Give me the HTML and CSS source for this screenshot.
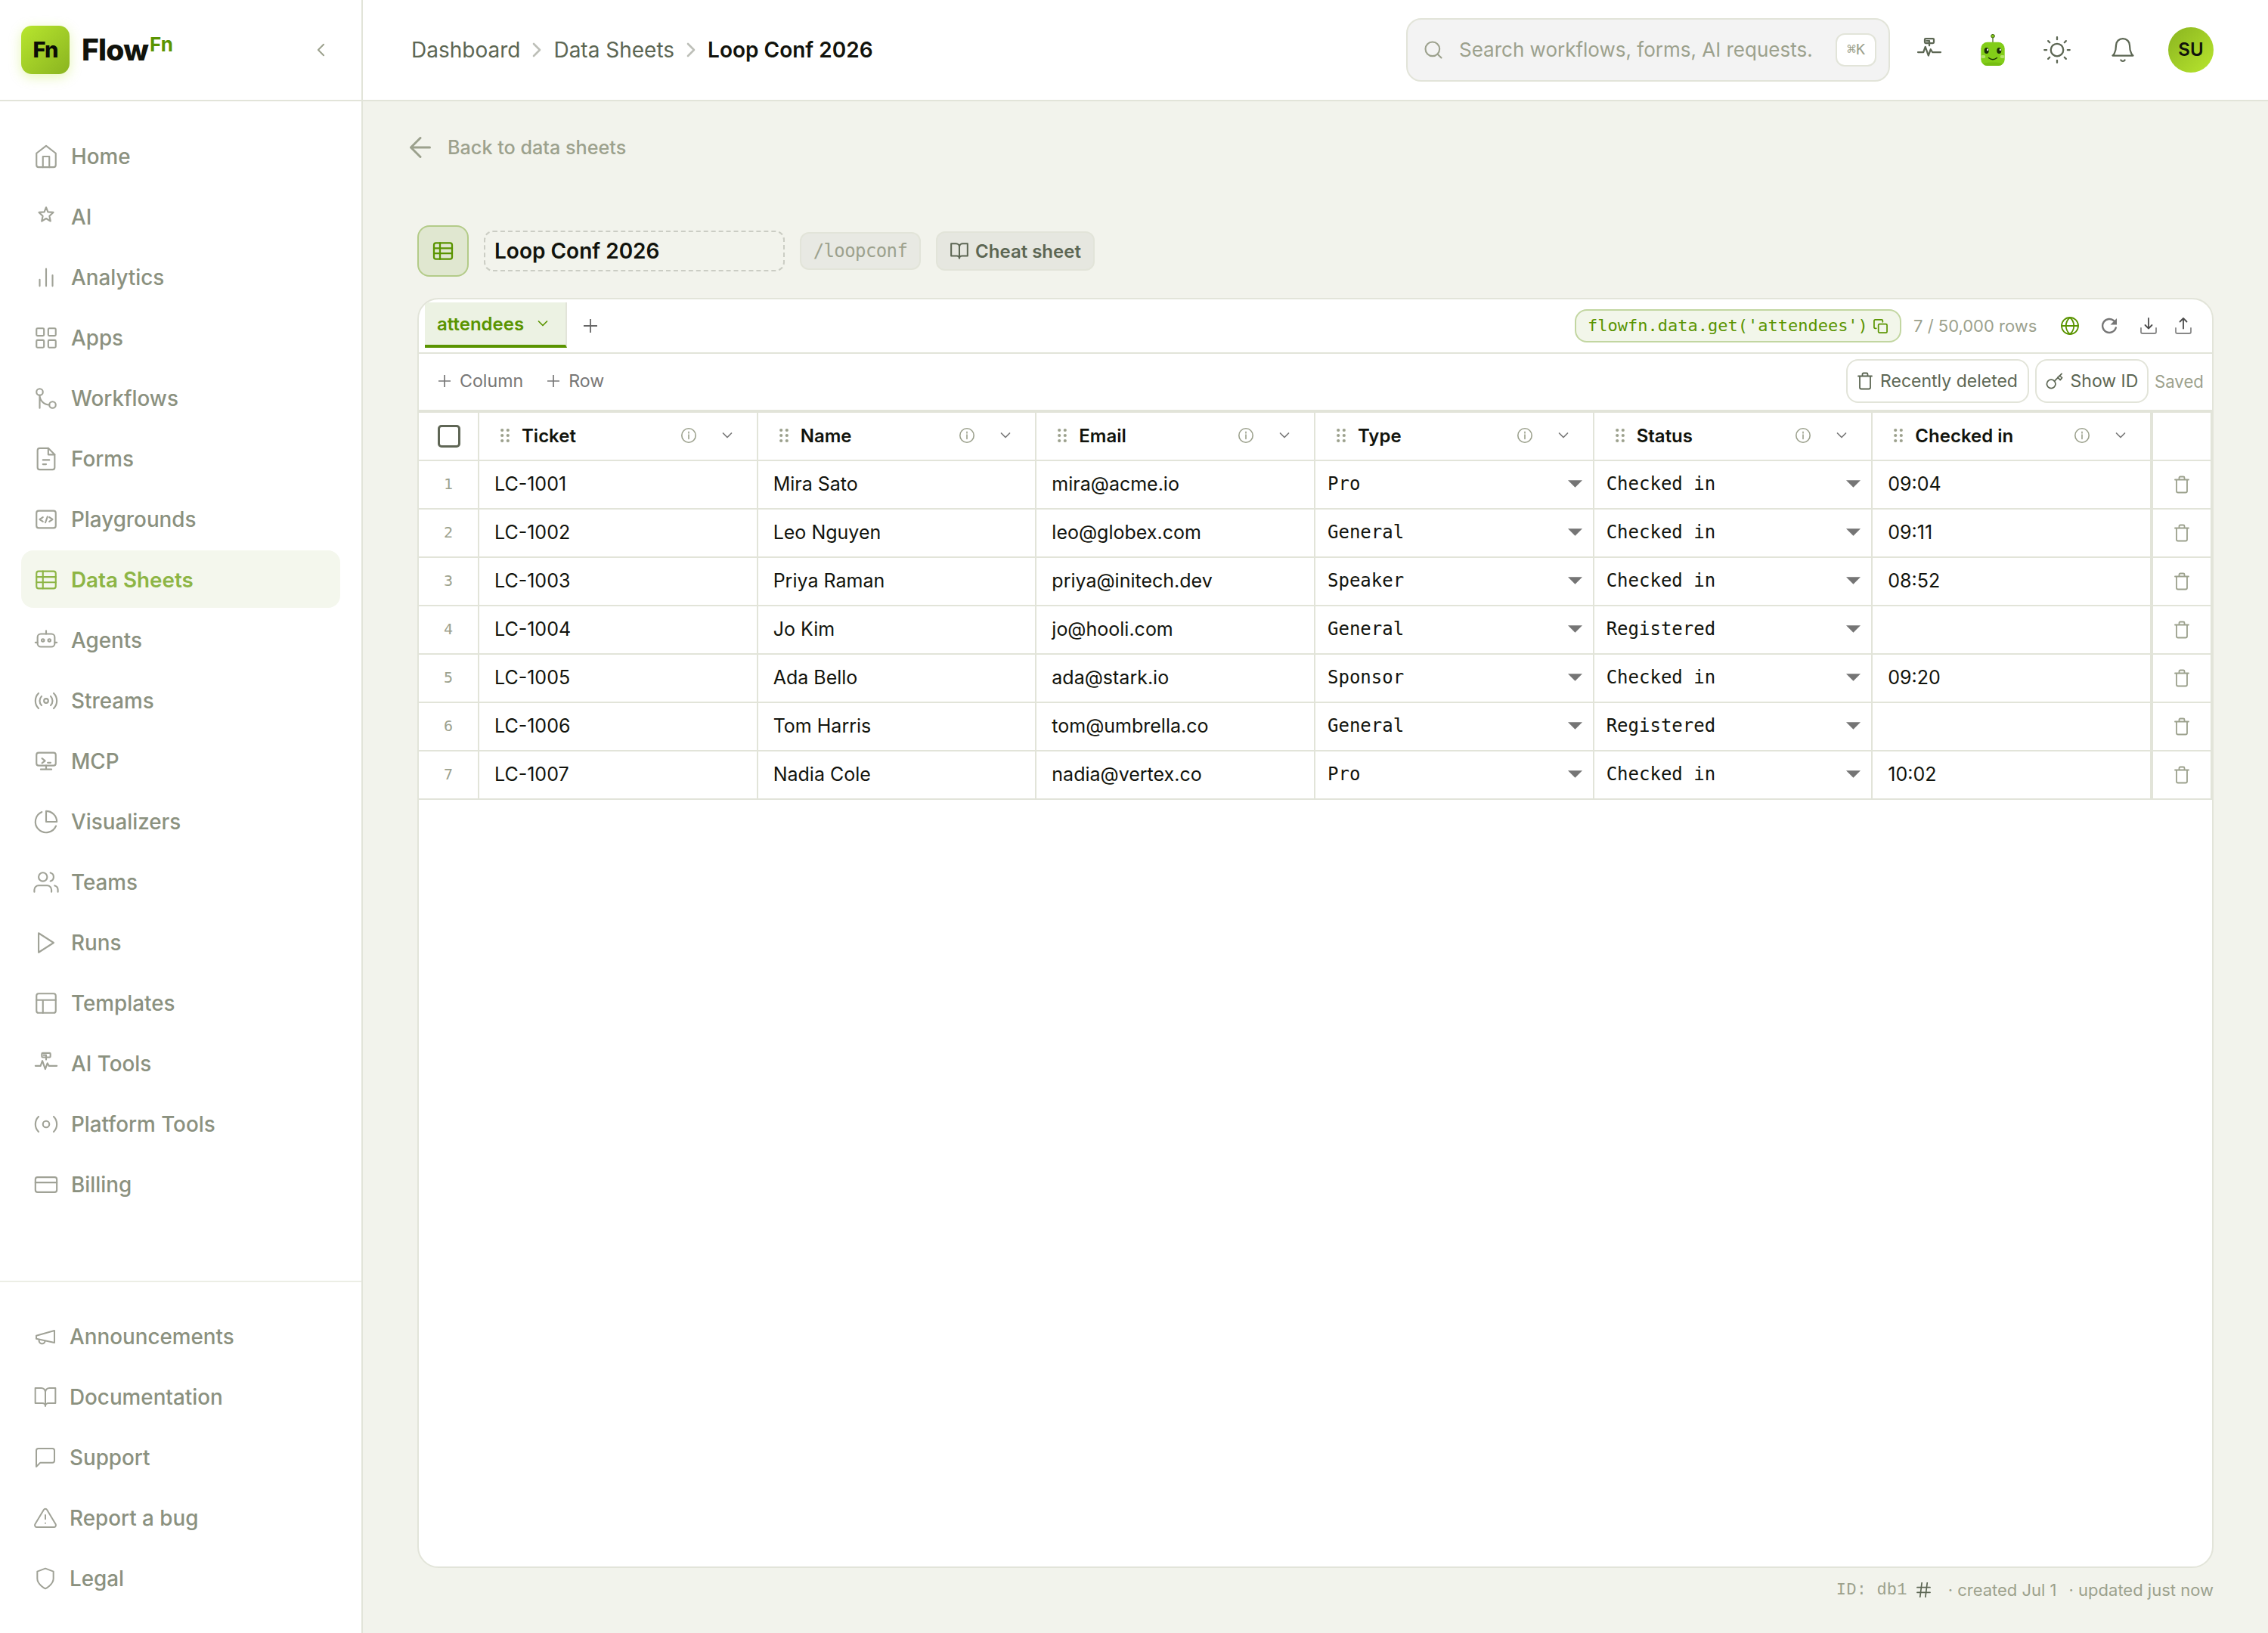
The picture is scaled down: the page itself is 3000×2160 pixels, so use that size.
FILE: index.html
```html
<!DOCTYPE html>
<html lang="en">
<head>
<meta charset="utf-8">
<title>Loop Conf 2026 – FlowFn</title>
<link rel="stylesheet" href="styles.css">
</head>
<body>
<svg class="sprite" width="0" height="0">
  <symbol id="i-home" viewBox="0 0 24 24"><path d="M3 9l9-7 9 7v11a2 2 0 0 1-2 2H5a2 2 0 0 1-2-2z"/><path d="M9 22V12h6v10"/></symbol>
  <symbol id="i-star" viewBox="0 0 24 24"><path d="M12 3l1.7 4.3 5 .4-3.6 3.4 1 4.8L12 13.400l-4.100 2.500 1-4.800-3.600-3.400 5-.4z"/></symbol>
  <symbol id="i-bars" viewBox="0 0 24 24"><path d="M6 20v-6M12 20V4M18 20V10"/></symbol>
  <symbol id="i-grid" viewBox="0 0 24 24"><rect x="3" y="3" width="7" height="7" rx="1"/><rect x="14" y="3" width="7" height="7" rx="1"/><rect x="3" y="14" width="7" height="7" rx="1"/><rect x="14" y="14" width="7" height="7" rx="1"/></symbol>
  <symbol id="i-flow" viewBox="0 0 24 24"><circle cx="6" cy="6" r="3"/><circle cx="18" cy="18" r="3"/><path d="M6 21V9a9 9 0 0 0 9 9"/></symbol>
  <symbol id="i-file" viewBox="0 0 24 24"><path d="M14 2H6a2 2 0 0 0-2 2v16a2 2 0 0 0 2 2h12a2 2 0 0 0 2-2V8z"/><path d="M14 2v6h6M9 13h6M9 17h3"/></symbol>
  <symbol id="i-code" viewBox="0 0 24 24"><rect x="3" y="4" width="18" height="16" rx="2"/><path d="M9 10l-3 2 3 2M15 10l3 2-3 2M13.300 9.500l-2 5.500"/></symbol>
  <symbol id="i-table" viewBox="0 0 24 24"><rect x="3" y="4" width="18" height="16" rx="2"/><path d="M3 9.300h18M3 14.300h18M9 4v16"/></symbol>
  <symbol id="i-bot" viewBox="0 0 24 24"><rect x="4" y="6" width="16" height="12" rx="3"/><circle cx="9" cy="12" r="1.200"/><circle cx="15" cy="12" r="1.200"/><path d="M12 3v3M2 14h2M20 14h2"/></symbol>
  <symbol id="i-stream" viewBox="0 0 24 24"><circle cx="12" cy="12" r="2"/><path d="M16.240 7.760a6 6 0 0 1 0 8.490M7.760 16.240a6 6 0 0 1 0-8.490M19.070 4.930a10 10 0 0 1 0 14.140M4.930 19.070a10 10 0 0 1 0-14.140"/></symbol>
  <symbol id="i-mcp" viewBox="0 0 24 24"><rect x="3" y="4" width="18" height="12" rx="2"/><path d="M12 16v3.500M7 19.500h10M8.200 9.300l2.800 2.200-2.800 2.200M13.500 13.300h2.700"/></symbol>
  <symbol id="i-pie" viewBox="0 0 24 24"><path d="M21.210 15.890A10 10 0 1 1 8 2.830"/><path d="M22 12A10 10 0 0 0 12 2v10z"/></symbol>
  <symbol id="i-users" viewBox="0 0 24 24"><path d="M17 21v-2a4 4 0 0 0-4-4H5a4 4 0 0 0-4 4v2"/><circle cx="9" cy="7" r="4"/><path d="M23 21v-2a4 4 0 0 0-3-3.870M16 3.130a4 4 0 0 1 0 7.750"/></symbol>
  <symbol id="i-play" viewBox="0 0 24 24"><path d="M5 3l14 9-14 9z"/></symbol>
  <symbol id="i-layout" viewBox="0 0 24 24"><rect x="3" y="3" width="18" height="18" rx="2"/><path d="M3 9h18M9 21V9"/></symbol>
  <symbol id="i-pulse" viewBox="0 0 24 24"><rect x="8" y="2" width="8" height="4" rx=".8"/><path d="M9.500 4H12v4.200"/><path d="M2 14h4.800L8.500 9.300l2.700 7.700 2-5.500 1.500 2.500H22"/></symbol>
  <symbol id="i-platform" viewBox="0 0 24 24"><circle cx="12" cy="12" r="3"/><path d="M19.070 4.930a10 10 0 0 1 0 14.140M4.930 19.070a10 10 0 0 1 0-14.140"/></symbol>
  <symbol id="i-card" viewBox="0 0 24 24"><rect x="2" y="5" width="20" height="14" rx="2"/><path d="M2 10h20"/></symbol>
  <symbol id="i-horn" viewBox="0 0 24 24"><path d="M3 11l18-5v12L3 14z"/><path d="M11.600 16.800a3 3 0 1 1-5.800-1.600"/></symbol>
  <symbol id="i-book" viewBox="0 0 24 24"><path d="M2 3h6a4 4 0 0 1 4 4v14a3 3 0 0 0-3-3H2zM22 3h-6a4 4 0 0 0-4 4v14a3 3 0 0 1 3-3h7z"/></symbol>
  <symbol id="i-chat" viewBox="0 0 24 24"><path d="M21 15a2 2 0 0 1-2 2H7l-4 4V5a2 2 0 0 1 2-2h14a2 2 0 0 1 2 2z"/></symbol>
  <symbol id="i-alert" viewBox="0 0 24 24"><path d="M10.290 3.860L1.820 18a2 2 0 0 0 1.710 3h16.940a2 2 0 0 0 1.710-3L13.710 3.860a2 2 0 0 0-3.420 0zM12 9v4M12 17h.01"/></symbol>
  <symbol id="i-shield" viewBox="0 0 24 24"><path d="M12 22s8-4 8-10V5l-8-3-8 3v7c0 6 8 10 8 10z"/></symbol>
  <symbol id="i-sun" viewBox="0 0 24 24"><circle cx="12" cy="12" r="5.500"/><path d="M12 .8v2M12 21.200v2M4.100 4.100l1.400 1.400M18.500 18.500l1.400 1.400M.8 12h2M21.200 12h2M4.100 19.900l1.400-1.400M18.500 5.500l1.400-1.400"/></symbol>
  <symbol id="i-bell" viewBox="0 0 24 24"><path d="M18 8A6 6 0 0 0 6 8c0 7-3 9-3 9h18s-3-2-3-9M13.730 21a2 2 0 0 1-3.460 0"/></symbol>
  <symbol id="i-search" viewBox="0 0 24 24"><circle cx="11" cy="11" r="8"/><path d="M21 21l-4.350-4.350"/></symbol>
  <symbol id="i-chev-r" viewBox="0 0 12 20"><path d="M2 2l8 8-8 8"/></symbol>
  <symbol id="i-chev-l" viewBox="0 0 12 20"><path d="M10 2l-8 8 8 8"/></symbol>
  <symbol id="i-chev-d" viewBox="0 0 14 10"><path d="M1.500 2L7 7.500 12.500 2"/></symbol>
  <symbol id="i-arrow" viewBox="0 0 28 28"><path d="M26.500 14H1.500M14 1.500L1.500 14 14 26.500"/></symbol>
  <symbol id="i-plus" viewBox="0 0 18 18"><path d="M9 0v18M0 9h18"/></symbol>
  <symbol id="i-copy" viewBox="0 0 20 20"><rect x="7" y="7" width="12" height="12" rx="1.500"/><path d="M4 13H2.500A1.500 1.500 0 0 1 1 11.500v-9A1.500 1.500 0 0 1 2.500 1h9A1.500 1.500 0 0 1 13 2.500V4"/></symbol>
  <symbol id="i-globe" viewBox="0 0 24 24"><circle cx="12" cy="12" r="11"/><path d="M1 12h22M12 1c7 6 7 16 0 22M12 1c-7 6-7 16 0 22"/></symbol>
  <symbol id="i-refresh" viewBox="0 0 24 24"><path d="M20.800 14.500A9 9 0 1 1 18.500 5.600"/><path class="solid" d="M22 2v8.500h-8.500z"/></symbol>
  <symbol id="i-down" viewBox="0 0 24 24"><path class="soft" d="M2 15v5a2 2 0 0 0 2 2h16a2 2 0 0 0 2-2v-5"/><path d="M12 2v13.500M7.500 11l4.500 4.500 4.500-4.500"/></symbol>
  <symbol id="i-up" viewBox="0 0 24 24"><path class="soft" d="M2 15v5a2 2 0 0 0 2 2h16a2 2 0 0 0 2-2v-5"/><path d="M12 15.500V2M7.500 6.500L12 2l4.500 4.500"/></symbol>
  <symbol id="i-trash" viewBox="0 0 20 24"><path d="M1 5.500h18M3 5.500v15A2 2 0 0 0 5 22.500h10a2 2 0 0 0 2-2v-15M6.500 5.500V3a1.500 1.500 0 0 1 1.500-1.500h4A1.500 1.500 0 0 1 13.500 3v2.500"/></symbol>
  <symbol id="i-key" viewBox="0 0 24 24"><circle cx="7.500" cy="15.500" r="6"/><path d="M12 11.500L22 1.500M16.500 6.500l3.500 3.500 2.500-3-3.500-3"/></symbol>
  <symbol id="i-dots" viewBox="0 0 12 20"><circle cx="2.200" cy="3" r="2.100"/><circle cx="9.800" cy="3" r="2.100"/><circle cx="2.200" cy="10" r="2.100"/><circle cx="9.800" cy="10" r="2.100"/><circle cx="2.200" cy="17" r="2.100"/><circle cx="9.800" cy="17" r="2.100"/></symbol>
  <symbol id="i-info" viewBox="0 0 20 20"><circle cx="10" cy="10" r="9.200"/><path d="M10 9v5.500M10 5.300v1.600"/></symbol>
  <symbol id="i-caret" viewBox="0 0 20 10"><path d="M0 0h20L10 10z"/></symbol>
  <symbol id="i-hash" viewBox="0 0 20 20"><path d="M1 6.500h18M1 13.500h18M7.500 0L5 20M15 0l-2.500 20"/></symbol>
</svg>

<div class="app">
  <aside class="sidebar">
    <div class="brand">
      <div class="brand-mark">Fn</div>
      <div class="brand-name">Flow<span class="brand-sup">Fn</span></div>
      <svg class="brand-toggle"><use href="#i-chev-l"/></svg>
    </div>
    <nav class="nav nav-top">
      <a class="nav-item"><svg class="nav-icon"><use href="#i-home"/></svg>Home</a>
      <a class="nav-item"><svg class="nav-icon"><use href="#i-star"/></svg>AI</a>
      <a class="nav-item"><svg class="nav-icon"><use href="#i-bars"/></svg>Analytics</a>
      <a class="nav-item"><svg class="nav-icon"><use href="#i-grid"/></svg>Apps</a>
      <a class="nav-item"><svg class="nav-icon"><use href="#i-flow"/></svg>Workflows</a>
      <a class="nav-item"><svg class="nav-icon"><use href="#i-file"/></svg>Forms</a>
      <a class="nav-item"><svg class="nav-icon"><use href="#i-code"/></svg>Playgrounds</a>
      <a class="nav-item active"><svg class="nav-icon"><use href="#i-table"/></svg>Data Sheets</a>
      <a class="nav-item"><svg class="nav-icon"><use href="#i-bot"/></svg>Agents</a>
      <a class="nav-item"><svg class="nav-icon"><use href="#i-stream"/></svg>Streams</a>
      <a class="nav-item"><svg class="nav-icon"><use href="#i-mcp"/></svg>MCP</a>
      <a class="nav-item"><svg class="nav-icon"><use href="#i-pie"/></svg>Visualizers</a>
      <a class="nav-item"><svg class="nav-icon"><use href="#i-users"/></svg>Teams</a>
      <a class="nav-item"><svg class="nav-icon"><use href="#i-play"/></svg>Runs</a>
      <a class="nav-item"><svg class="nav-icon"><use href="#i-layout"/></svg>Templates</a>
      <a class="nav-item"><svg class="nav-icon"><use href="#i-pulse"/></svg>AI Tools</a>
      <a class="nav-item"><svg class="nav-icon"><use href="#i-platform"/></svg>Platform Tools</a>
      <a class="nav-item"><svg class="nav-icon"><use href="#i-card"/></svg>Billing</a>
    </nav>
    <nav class="nav nav-foot">
      <a class="nav-item"><svg class="nav-icon"><use href="#i-horn"/></svg>Announcements</a>
      <a class="nav-item"><svg class="nav-icon"><use href="#i-book"/></svg>Documentation</a>
      <a class="nav-item"><svg class="nav-icon"><use href="#i-chat"/></svg>Support</a>
      <a class="nav-item"><svg class="nav-icon"><use href="#i-alert"/></svg>Report a bug</a>
      <a class="nav-item"><svg class="nav-icon"><use href="#i-shield"/></svg>Legal</a>
    </nav>
  </aside>

  <div class="main">
    <header class="topbar">
      <div class="crumbs">
        <span>Dashboard</span><svg class="crumb-sep"><use href="#i-chev-r"/></svg>
        <span>Data Sheets</span><svg class="crumb-sep"><use href="#i-chev-r"/></svg>
        <strong>Loop Conf 2026</strong>
      </div>
      <div class="search">
        <svg class="search-icon"><use href="#i-search"/></svg>
        <span class="search-text">Search workflows, forms, AI requests.</span>
        <kbd class="kbd">⌘K</kbd>
      </div>
      <div class="actions">
        <svg class="action"><use href="#i-pulse"/></svg>
        <svg class="robot" viewBox="0 0 36 44">
          <path d="M18 6v6" stroke="#3f6212" stroke-width="1.200"/>
          <circle cx="18" cy="3.700" r="2.300" fill="#84cc16" stroke="#3f6212" stroke-width="1"/>
          <rect x="2.300" y="11.700" width="31.400" height="31.300" rx="8.500" fill="#82cd18"/>
          <path d="M5 40.500c4-2.600 22-2.600 26 0-1.500 1.700-3.500 2.500-6 2.500H11c-2.500 0-4.500-.8-6-2.500z" fill="#76be12"/>
          <rect x="2.300" y="29" width="6" height="4" rx="2" fill="#b5e36a"/>
          <rect x="27.700" y="29" width="6" height="4" rx="2" fill="#b5e36a"/>
          <ellipse cx="9.700" cy="23" rx="3" ry="4" fill="#1a2e05"/>
          <ellipse cx="26.300" cy="23" rx="3" ry="4" fill="#1a2e05"/>
          <ellipse cx="11.200" cy="21.700" rx="1" ry="1.500" fill="#fff"/>
          <ellipse cx="27.800" cy="21.700" rx="1" ry="1.500" fill="#fff"/>
          <path d="M12.500 32.500q5.500 4.500 11 0" fill="none" stroke="#1a2e05" stroke-width="1.400" stroke-linecap="round"/>
        </svg>
        <svg class="action sun"><use href="#i-sun"/></svg>
        <svg class="action bell"><use href="#i-bell"/></svg>
        <div class="avatar">SU</div>
      </div>
    </header>

    <div class="content">
      <a class="back"><svg class="back-icon"><use href="#i-arrow"/></svg>Back to data sheets</a>
      <div class="title-row">
        <div class="sheet-badge"><svg class="sheet-icon"><use href="#i-table"/></svg></div>
        <div class="title-input">Loop Conf 2026</div>
        <div class="slug">/loopconf</div>
        <div class="cheat"><svg class="cheat-icon"><use href="#i-book"/></svg>Cheat sheet</div>
      </div>

      <section class="card">
        <div class="tabs">
          <div class="tab">attendees<svg class="tab-chev"><use href="#i-chev-d"/></svg></div>
          <svg class="tab-add"><use href="#i-plus"/></svg>
          <div class="tabs-right">
            <div class="snippet">flowfn.data.get('attendees')<svg class="copy"><use href="#i-copy"/></svg></div>
            <span class="count">7 / 50,000 rows</span>
            <svg class="tool globe"><use href="#i-globe"/></svg>
            <svg class="tool refresh"><use href="#i-refresh"/></svg>
            <svg class="tool down"><use href="#i-down"/></svg>
            <svg class="tool up"><use href="#i-up"/></svg>
          </div>
        </div>
        <div class="toolbar">
          <div class="add"><svg class="add-icon"><use href="#i-plus"/></svg>Column</div>
          <div class="add"><svg class="add-icon"><use href="#i-plus"/></svg>Row</div>
          <div class="toolbar-right">
            <div class="btn"><svg class="trash"><use href="#i-trash"/></svg>Recently deleted</div>
            <div class="btn btn-key"><svg class="key"><use href="#i-key"/></svg>Show ID</div>
            <span class="saved">Saved</span>
          </div>
        </div>
        <div class="grid">
          <div class="row head">
            <div class="cell pick"><span class="checkbox"></span></div>
            <div class="cell"><svg class="dots"><use href="#i-dots"/></svg><b>Ticket</b><svg class="info"><use href="#i-info"/></svg><svg class="chev"><use href="#i-chev-d"/></svg></div>
            <div class="cell"><svg class="dots"><use href="#i-dots"/></svg><b>Name</b><svg class="info"><use href="#i-info"/></svg><svg class="chev"><use href="#i-chev-d"/></svg></div>
            <div class="cell"><svg class="dots"><use href="#i-dots"/></svg><b>Email</b><svg class="info"><use href="#i-info"/></svg><svg class="chev"><use href="#i-chev-d"/></svg></div>
            <div class="cell"><svg class="dots"><use href="#i-dots"/></svg><b>Type</b><svg class="info"><use href="#i-info"/></svg><svg class="chev"><use href="#i-chev-d"/></svg></div>
            <div class="cell"><svg class="dots"><use href="#i-dots"/></svg><b>Status</b><svg class="info"><use href="#i-info"/></svg><svg class="chev"><use href="#i-chev-d"/></svg></div>
            <div class="cell"><svg class="dots"><use href="#i-dots"/></svg><b>Checked in</b><svg class="info"><use href="#i-info"/></svg><svg class="chev"><use href="#i-chev-d"/></svg></div>
            <div class="cell end"></div>
          </div>
          <div class="row"><div class="cell num">1</div><div class="cell">LC-1001</div><div class="cell">Mira Sato</div><div class="cell">mira@acme.io</div><div class="cell select">Pro<svg class="caret"><use href="#i-caret"/></svg></div><div class="cell select">Checked in<svg class="caret"><use href="#i-caret"/></svg></div><div class="cell">09:04</div><div class="cell end"><svg class="trash"><use href="#i-trash"/></svg></div></div>
          <div class="row"><div class="cell num">2</div><div class="cell">LC-1002</div><div class="cell">Leo Nguyen</div><div class="cell">leo@globex.com</div><div class="cell select">General<svg class="caret"><use href="#i-caret"/></svg></div><div class="cell select">Checked in<svg class="caret"><use href="#i-caret"/></svg></div><div class="cell">09:11</div><div class="cell end"><svg class="trash"><use href="#i-trash"/></svg></div></div>
          <div class="row"><div class="cell num">3</div><div class="cell">LC-1003</div><div class="cell">Priya Raman</div><div class="cell">priya@initech.dev</div><div class="cell select">Speaker<svg class="caret"><use href="#i-caret"/></svg></div><div class="cell select">Checked in<svg class="caret"><use href="#i-caret"/></svg></div><div class="cell">08:52</div><div class="cell end"><svg class="trash"><use href="#i-trash"/></svg></div></div>
          <div class="row"><div class="cell num">4</div><div class="cell">LC-1004</div><div class="cell">Jo Kim</div><div class="cell">jo@hooli.com</div><div class="cell select">General<svg class="caret"><use href="#i-caret"/></svg></div><div class="cell select">Registered<svg class="caret"><use href="#i-caret"/></svg></div><div class="cell"></div><div class="cell end"><svg class="trash"><use href="#i-trash"/></svg></div></div>
          <div class="row"><div class="cell num">5</div><div class="cell">LC-1005</div><div class="cell">Ada Bello</div><div class="cell">ada@stark.io</div><div class="cell select">Sponsor<svg class="caret"><use href="#i-caret"/></svg></div><div class="cell select">Checked in<svg class="caret"><use href="#i-caret"/></svg></div><div class="cell">09:20</div><div class="cell end"><svg class="trash"><use href="#i-trash"/></svg></div></div>
          <div class="row"><div class="cell num">6</div><div class="cell">LC-1006</div><div class="cell">Tom Harris</div><div class="cell">tom@umbrella.co</div><div class="cell select">General<svg class="caret"><use href="#i-caret"/></svg></div><div class="cell select">Registered<svg class="caret"><use href="#i-caret"/></svg></div><div class="cell"></div><div class="cell end"><svg class="trash"><use href="#i-trash"/></svg></div></div>
          <div class="row"><div class="cell num">7</div><div class="cell">LC-1007</div><div class="cell">Nadia Cole</div><div class="cell">nadia@vertex.co</div><div class="cell select">Pro<svg class="caret"><use href="#i-caret"/></svg></div><div class="cell select">Checked in<svg class="caret"><use href="#i-caret"/></svg></div><div class="cell">10:02</div><div class="cell end"><svg class="trash"><use href="#i-trash"/></svg></div></div>
        </div>
      </section>

      <footer class="meta">
        <span class="meta-id">ID: db1</span>
        <svg class="hash"><use href="#i-hash"/></svg>
        <span class="meta-created">· created Jul 1</span>
        <span>· updated just now</span>
      </footer>
    </div>
  </div>
</div>
</body>
</html>
```

FILE: styles.css
```css
:root {
  --line: #e2e4d9;
  --bg: #f2f3ec;
  --ink: #11130c;
  --muted: #9ca18d;
  --text-2: #5c6653;
  --green: #5a9400;
  --mono: "DejaVu Sans Mono", monospace;
}
* { box-sizing: border-box; }
body {
  margin: 0;
  font-family: Inter, sans-serif;
  color: var(--ink);
  background: var(--bg);
}
svg {
  display: block;
  flex: none;
  fill: none;
  stroke: currentColor;
  stroke-linecap: round;
  stroke-linejoin: round;
}
.sprite { position: absolute; }
.app { display: flex; width: 3000px; height: 2160px; }

/* Sidebar */
.sidebar {
  display: flex;
  flex-direction: column;
  flex: none;
  width: 480px;
  background: #fff;
  border-right: 2px solid var(--line);
}
.brand {
  display: flex;
  align-items: center;
  height: 134px;
  padding: 0 48px 0 28px;
  border-bottom: 2px solid var(--line);
}
.brand-mark {
  width: 64px;
  height: 64px;
  border-radius: 14px;
  background: linear-gradient(135deg, #b8e62e, #8ab420);
  box-shadow: 0 4px 16px rgba(184, 230, 46, .35);
  font-size: 29px;
  font-weight: 800;
  line-height: 63px;
  text-align: center;
  letter-spacing: -1px;
  color: #0b0d06;
}
.brand-name {
  display: flex;
  margin-left: 16px;
  font-size: 39px;
  font-weight: 800;
  letter-spacing: -.8px;
  line-height: 46px;
}
.brand-sup { margin: -7px 0 0 2px; font-size: 26px; font-weight: 700; letter-spacing: 0; color: var(--green); }
.brand-toggle { width: 11px; height: 18px; margin-left: auto; color: var(--muted); stroke-width: 2.2; }
.nav {
  display: flex;
  flex-direction: column;
  gap: 4px;
  padding: 34px 28px;
}
.nav-item {
  display: flex;
  align-items: center;
  gap: 16px;
  height: 76px;
  padding: 0 16px;
  border-radius: 16px;
  font-size: 27.800px;
  font-weight: 500;
  color: #8b917f;
}
.nav-top .nav-item { padding-top: 1px; }
.nav-icon { width: 34px; height: 34px; stroke-width: 1.5; color: #a0a297; }
.nav-item.active { background: #f4f7ed; color: #8db545; font-weight: 600; }
.active .nav-icon { color: #8db545; }
.nav-foot { margin-top: auto; border-top: 2px solid #eceee5; }
.nav-foot .nav-icon { width: 32px; height: 32px; }

/* Top bar */
.main { display: flex; flex-direction: column; flex: 1; min-width: 0; }
.topbar {
  display: flex;
  align-items: center;
  flex: none;
  height: 134px;
  padding: 0 72px 0 64px;
  background: #fff;
  border-bottom: 2px solid var(--line);
}
.crumbs { display: flex; align-items: center; font-size: 28px; color: var(--text-2); }
.crumbs strong { font-weight: 600; color: var(--ink); }
.crumb-sep { width: 12px; height: 20px; margin: 0 16px; color: #bdbfb8; stroke-width: 2.6; }
.search {
  display: flex;
  align-items: center;
  width: 640px;
  height: 84px;
  margin-left: auto;
  padding: 0 16px 0 20px;
  border: 2px solid var(--line);
  border-radius: 20px;
  background: #f3f3f3;
}
.search-icon { width: 28px; height: 28px; color: var(--muted); stroke-width: 1.8; }
.search-text { margin-left: 20px; padding-bottom: 1px; font-size: 26px; color: var(--muted); white-space: nowrap; }
.kbd {
  width: 54px;
  height: 44px;
  margin-left: auto;
  border: 2px solid var(--line);
  border-radius: 12px;
  background: #fff;
  font: 20px/39px var(--mono);
  text-align: center;
  color: var(--muted);
}
.actions { display: flex; align-items: center; padding-left: 34px; color: var(--text-2); }
.action { width: 36px; height: 36px; stroke-width: 1.5; }
.robot { width: 36px; height: 44px; margin: 0 0 0 48px; stroke: none; }
.sun { margin-left: 49px; }
.bell { margin-left: 51px; }
.avatar {
  width: 60px;
  height: 60px;
  margin-left: 42px;
  border-radius: 50%;
  background: linear-gradient(135deg, #8ab420, #b8e62e);
  font-size: 24px;
  font-weight: 600;
  line-height: 60px;
  text-align: center;
  color: var(--ink);
}

/* Page */
.content { display: flex; flex-direction: column; flex: 1; padding: 41px 72px 0; }
.back {
  display: flex;
  align-items: center;
  gap: 22px;
  height: 40px;
  margin-left: -10px;
  font-size: 25.200px;
  font-weight: 500;
  color: var(--muted);
}
.back-icon { width: 28px; height: 28px; stroke-width: 3; }
.title-row { display: flex; align-items: center; height: 68px; margin-top: 83px; }
.sheet-badge {
  display: flex;
  align-items: center;
  justify-content: center;
  width: 68px;
  height: 68px;
  border: 2px solid #b3cb88;
  border-radius: 16px;
  background: #e0e7d0;
}
.sheet-icon { width: 32px; height: 32px; color: var(--green); stroke-width: 1.7; }
.title-input {
  width: 398px;
  height: 54px;
  margin-left: 20px;
  padding-left: 12px;
  border: 2px dashed #cbcdc4;
  border-radius: 12px;
  font-size: 28px;
  font-weight: 600;
  line-height: 51px;
}
.slug {
  width: 160px;
  height: 50px;
  margin-left: 20px;
  border: 2px solid var(--line);
  border-radius: 12px;
  background: #e8e9e3;
  font: 24px/47px var(--mono);
  letter-spacing: -.6px;
  text-align: center;
  color: var(--muted);
}
.cheat {
  display: flex;
  align-items: center;
  justify-content: center;
  gap: 8px;
  width: 210px;
  height: 52px;
  margin-left: 20px;
  border: 2px solid var(--line);
  border-radius: 12px;
  background: #e6e7e0;
  font-size: 24px;
  font-weight: 600;
  color: var(--text-2);
}
.cheat-icon { width: 26px; height: 26px; stroke-width: 1.9; }

/* Data card */
.card {
  display: flex;
  flex-direction: column;
  height: 1680px;
  margin-top: 28px;
  overflow: hidden;
  border: 2px solid var(--line);
  border-radius: 28px;
  background: #fff;
}
.tabs {
  display: flex;
  align-items: center;
  flex: none;
  height: 72px;
  padding: 0 26px 0 8px;
  border-bottom: 2px solid var(--line);
  color: #777;
}
.tab {
  display: flex;
  align-items: center;
  gap: 18px;
  width: 188px;
  height: 60px;
  margin-top: -2px;
  padding-left: 16px;
  border-right: 2px solid var(--line);
  border-bottom: 4px solid var(--green);
  background: #ecf2e3;
  font-size: 24px;
  font-weight: 600;
  color: var(--green);
}
.tab-chev { width: 14px; height: 10px; stroke-width: 1.7; }
.tab-add { width: 18px; height: 18px; margin: 0 0 0 22px; stroke-width: 1.8; color: #666; }
.tabs-right { display: flex; align-items: center; margin-left: auto; }
.snippet {
  display: flex;
  align-items: center;
  justify-content: space-between;
  width: 432px;
  height: 44px;
  padding: 0 16px 0 15px;
  border: 2px solid #c2d6a1;
  border-radius: 16px;
  background: #f2f6ea;
  font: 22px/40px var(--mono);
  color: var(--green);
}
.copy { width: 19px; height: 19px; stroke-width: 1.8; }
.count { width: 164px; margin-left: 16px; font-size: 22px; color: var(--muted); white-space: nowrap; }
.tool { width: 24px; height: 24px; stroke-width: 1.8; }
.globe { margin-left: 31px; color: var(--green); }
.refresh { margin-left: 28px; stroke-width: 2.4; }
.solid { fill: currentColor; stroke: none; }
.soft { stroke: #888; }
.down { margin-left: 28px; color: #4c4c4c; }
.up { margin-left: 22px; color: #4c4c4c; }
.toolbar {
  display: flex;
  align-items: center;
  flex: none;
  height: 76px;
  padding: 0 12px 2px 26px;
  border-bottom: 2px solid var(--line);
  font-size: 23.200px;
  color: #777;
}
.add { display: flex; align-items: center; gap: 12px; margin-right: 32px; }
.add-icon { width: 16px; height: 16px; stroke-width: 1.9; }
.toolbar-right { display: flex; align-items: center; margin-left: auto; }
.btn {
  display: flex;
  align-items: center;
  justify-content: center;
  gap: 10px;
  width: 242px;
  height: 58px;
  margin-right: 8px;
  border: 2px solid var(--line);
  border-radius: 16px;
  color: var(--text-2);
  font-size: 23px;
  white-space: nowrap;
}
.btn-key { width: 150px; }
.trash { width: 20px; height: 24px; stroke-width: 1.8; }
.key { width: 23px; height: 23px; stroke-width: 1.8; }
.saved { width: 64px; font-size: 22.200px; color: var(--muted); }

.grid { border-top: 2px solid var(--line); }
.row {
  display: grid;
  grid-template-columns: 80px repeat(6, 1fr) 80px;
  height: 64px;
  font-size: 25px;
}
.cell {
  display: flex;
  align-items: center;
  min-width: 0;
  padding: 0 0 3px 20px;
  border-right: 2px solid var(--line);
  border-bottom: 2px solid var(--line);
  white-space: nowrap;
}
.head .cell { padding: 0 32px 2px 28px; font-size: 24px; }
.head b { margin-left: 16px; font-weight: 600; }
.head .cell.pick, .cell.num, .row .cell.end { justify-content: center; padding: 0; }
.head .cell.pick { padding-left: 2px; }
.row .cell.end { padding-bottom: 1px; }
.cell.num { padding-bottom: 2px; font: 20px var(--mono); color: var(--muted); }
.cell.end { border-left: 2px solid var(--line); color: var(--muted); }
.checkbox { width: 30px; height: 30px; border: 3px solid #5f6655; border-radius: 5px; }
.dots { width: 12px; height: 20px; fill: var(--muted); stroke: none; }
.info { width: 20px; height: 20px; margin-left: auto; color: var(--muted); stroke-width: 1.6; }
.chev { width: 14px; height: 10px; margin-left: 34px; color: #777; stroke-width: 1.7; }
.cell.select { padding: 0 14px 2px 16px; font-family: var(--mono); font-size: 24px; }
.caret { width: 19px; height: 10px; margin-left: auto; fill: #757575; stroke: none; }

.meta {
  display: flex;
  align-items: center;
  justify-content: flex-end;
  height: 58px;
  font-size: 22px;
  color: var(--muted);
}
.meta-id { font-family: "Liberation Mono", monospace; letter-spacing: .2px; }
.hash { width: 19px; height: 20px; margin: 0 23px 0 12px; color: var(--text-2); stroke-width: 1.8; }
.meta-created { margin-right: 16px; }
```
